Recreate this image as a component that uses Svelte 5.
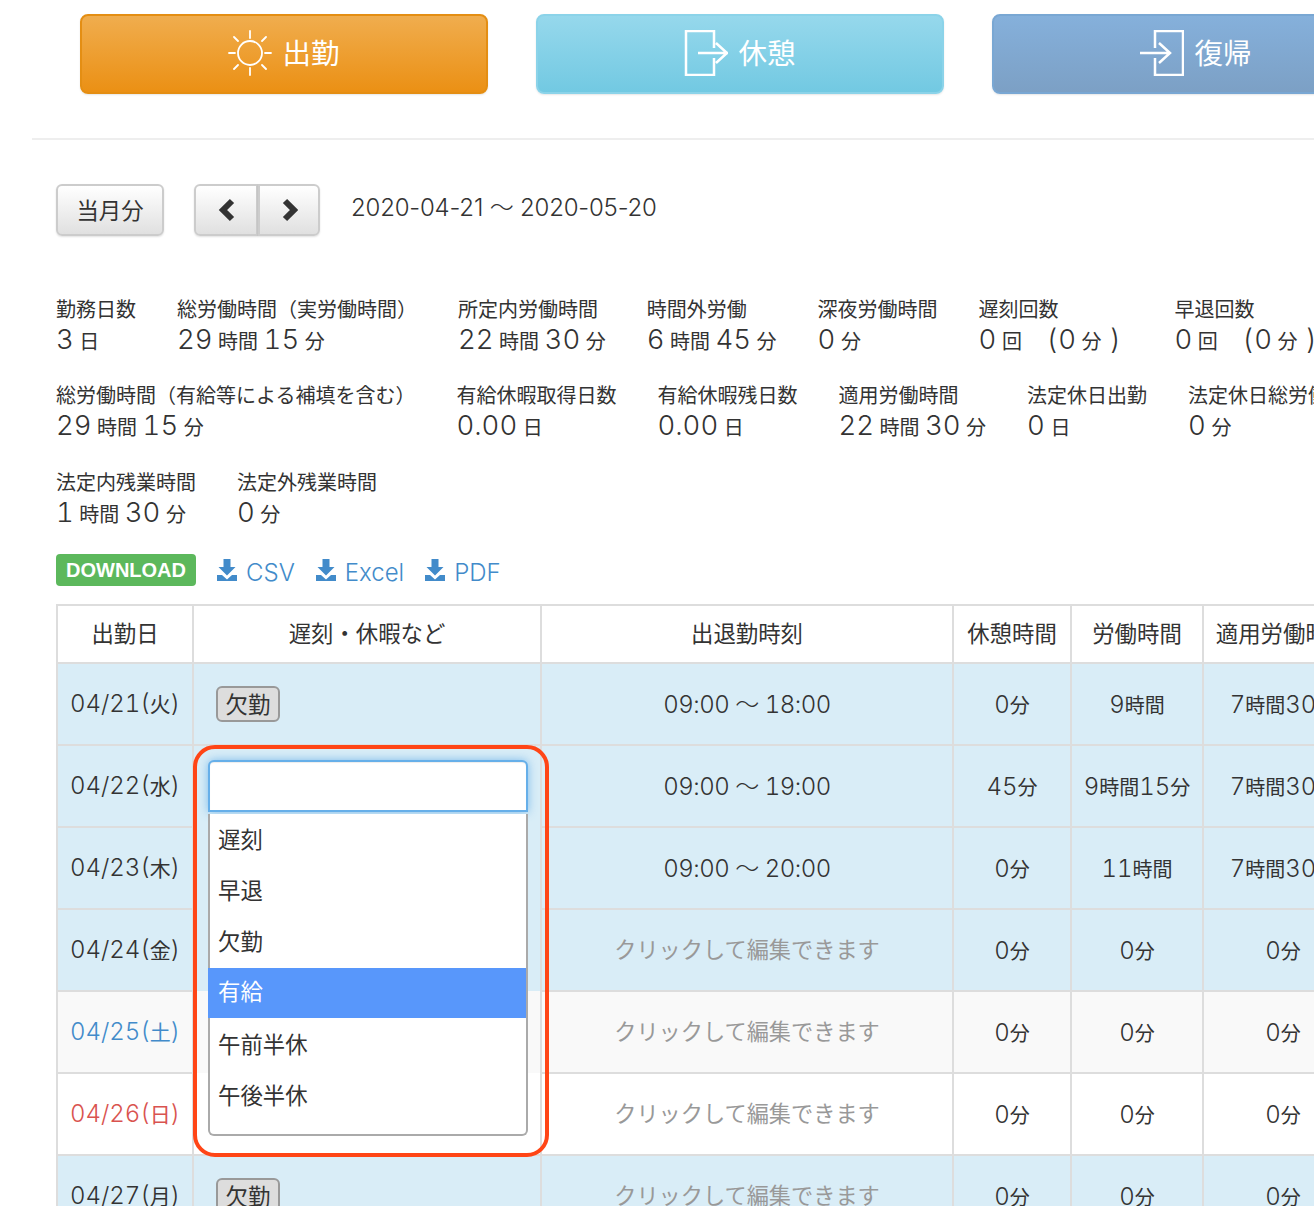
<script>
  const statRows = [
    [
      { label: '勤務日数', value: [['3', '日']] },
      { label: '総労働時間（実労働時間）', value: [['29', '時間'], ['15', '分']] },
      { label: '所定内労働時間', value: [['22', '時間'], ['30', '分']] },
      { label: '時間外労働', value: [['6', '時間'], ['45', '分']] },
      { label: '深夜労働時間', value: [['0', '分']] },
      { label: '遅刻回数', value: [['0', '回']], extra: true },
      { label: '早退回数', value: [['0', '回']], extra: true }
    ],
    [
      { label: '総労働時間（有給等による補填を含む）', value: [['29', '時間'], ['15', '分']] },
      { label: '有給休暇取得日数', value: [['0.00', '日']] },
      { label: '有給休暇残日数', value: [['0.00', '日']] },
      { label: '適用労働時間', value: [['22', '時間'], ['30', '分']] },
      { label: '法定休日出勤', value: [['0', '日']] },
      { label: '法定休日総労働時間', value: [['0', '分']] }
    ],
    [
      { label: '法定内残業時間', value: [['1', '時間'], ['30', '分']] },
      { label: '法定外残業時間', value: [['0', '分']] }
    ]
  ];

  const ph = 'クリックして編集できます';
  const rows = [
    { d: '04/21', w: '火', kind: 'work', badge: true, t: '09:00 ～ 18:00', a: [['0', '分']], b: [['9', '時間']], c: [['7', '時間'], ['30', '分']] },
    { d: '04/22', w: '水', kind: 'work', open: true, t: '09:00 ～ 19:00', a: [['45', '分']], b: [['9', '時間'], ['15', '分']], c: [['7', '時間'], ['30', '分']] },
    { d: '04/23', w: '木', kind: 'work', plain: true, t: '09:00 ～ 20:00', a: [['0', '分']], b: [['11', '時間']], c: [['7', '時間'], ['30', '分']] },
    { d: '04/24', w: '金', kind: 'work', plain: true, a: [['0', '分']], b: [['0', '分']], c: [['0', '分']] },
    { d: '04/25', w: '土', kind: 'sat', plain: true, a: [['0', '分']], b: [['0', '分']], c: [['0', '分']] },
    { d: '04/26', w: '日', kind: 'sun', plain: true, a: [['0', '分']], b: [['0', '分']], c: [['0', '分']] },
    { d: '04/27', w: '月', kind: 'work', badge: true, a: [['0', '分']], b: [['0', '分']], c: [['0', '分']] }
  ];

  const options = ['遅刻', '早退', '欠勤', '有給', '午前半休', '午後半休'];
</script>

{#snippet dur(parts)}
  {#each parts as p}<span class="n">{p[0]}</span><span class="u">{p[1]}</span>{/each}
{/snippet}

{#snippet download()}
  <svg class="dl" width="22" height="24" viewBox="0 0 22 24" aria-hidden="true">
    <path d="M7.500 1h7v8h5L11 17.500 2.500 9h5z" fill="#428bca" />
    <path d="M1 17h5l5 4.500 5-4.500h5v6H1z" fill="#428bca" />
  </svg>
{/snippet}

<div class="page">
  <div class="actions">
    <div class="btn orange">
      <svg width="44" height="46" viewBox="0 0 44 46" aria-hidden="true">
        <g fill="none" stroke="#fff" stroke-width="1.800" stroke-linecap="round">
          <circle cx="22" cy="23" r="12" />
          <path d="M22 1v7M22 38v7M1 23h6M37 23h6M6 7l4 4M38 7l-4 4M6 39l4-4M38 39l-4-4" />
        </g>
      </svg>
      <span>出勤</span>
    </div>
    <div class="btn cyan">
      <svg width="44" height="46" viewBox="0 0 44 46" aria-hidden="true">
        <path d="M30 18V1H2v44h28V28M14 23h30M32 13l11 10-11 10" fill="none" stroke="#fff" stroke-width="2.500" />
      </svg>
      <span>休憩</span>
    </div>
    <div class="btn blue">
      <svg width="44" height="46" viewBox="0 0 44 46" aria-hidden="true">
        <path d="M15 18V1h28v44H15V28M0 23h30M19 13l11 10-11 10" fill="none" stroke="#fff" stroke-width="2.500" />
      </svg>
      <span>復帰</span>
    </div>
  </div>

  <div class="content">
    <div class="toolbar">
      <div class="gbtn month"><span>当月分</span></div>
      <div class="pager">
        <div class="gbtn arrow">
          <svg width="18" height="24" viewBox="0 0 18 24" aria-hidden="true"><path d="M15 3 6 12l9 9" fill="none" stroke="#333" stroke-width="6" /></svg>
        </div>
        <div class="gbtn arrow">
          <svg width="18" height="24" viewBox="0 0 18 24" aria-hidden="true"><path d="M5 3l9 9-9 9" fill="none" stroke="#333" stroke-width="6" /></svg>
        </div>
      </div>
      <div class="range">2020-04-21 ～ 2020-05-20</div>
    </div>

    <div class="stats">
      {#each statRows as row}
        <div class="stat-row">
          {#each row as s}
            <div class="stat">
              <div class="label">{s.label}</div>
              <div class="value">
                {#each s.value as p}<span class="num">{p[0]}</span><span class="unit">{p[1]}</span>{/each}
                {#if s.extra}<span class="paren open">(</span><span class="num">0</span><span class="unit">分</span><span class="paren shut">)</span>{/if}
              </div>
            </div>
          {/each}
        </div>
      {/each}
    </div>

    <div class="downloads">
      <span class="tag">DOWNLOAD</span>
      <span class="link">{@render download()}CSV</span>
      <span class="link">{@render download()}Excel</span>
      <span class="link">{@render download()}PDF</span>
    </div>

    <table>
      <colgroup>
        <col class="c1" /><col class="c2" /><col class="c3" /><col class="c4" /><col class="c5" /><col class="c6" />
      </colgroup>
      <thead>
        <tr>
          <th><span>出勤日</span></th><th><span>遅刻・休暇など</span></th><th><span>出退勤時刻</span></th><th><span>休憩時間</span></th><th><span>労働時間</span></th><th><span>適用労働時間</span></th>
        </tr>
      </thead>
      <tbody>
        {#each rows as r}
          <tr class={r.kind}>
            <td class="date"><span class="day">{r.d}(<span class="wd">{r.w}</span>)</span></td>
            <td class="reason" class:merged-top={r.plain} class:merged-bottom={r.open || (r.plain && r.kind !== 'sun')}>
              {#if r.badge}<span class="badge">欠勤</span>{/if}
              {#if r.open}
                <div class="callout">
                  <div class="search"></div>
                  <ul class="list">
                    {#each options as o}
                      <li class:active={o === '有給'}>{o}</li>
                    {/each}
                  </ul>
                </div>
              {/if}
            </td>
            <td class="time">
              {#if r.t}<span class="clock">{r.t}</span>{:else}<span class="ph">{ph}</span>{/if}
            </td>
            <td class="num-cell">{@render dur(r.a)}</td>
            <td class="num-cell">{@render dur(r.b)}</td>
            <td class="num-cell">{@render dur(r.c)}</td>
          </tr>
        {/each}
      </tbody>
    </table>
  </div>
</div>

<style>
  :global(body) {
    margin: 0;
    overflow: hidden;
    background: #fff;
  }

  .page {
    width: 1314px;
    height: 1206px;
    overflow: hidden;
    box-sizing: border-box;
    padding: 14px 0 0 32px;
    color: #333;
    font-family: Inter, "Noto Sans CJK JP", sans-serif;
    font-weight: 300;
    font-variant-numeric: tabular-nums;
  }

  .actions {
    display: flex;
    gap: 48px;
    padding: 0 0 44px 48px;
    border-bottom: 2px solid #eee;
    width: 1400px;
  }

  .btn {
    flex: 0 0 auto;
    width: 408px;
    height: 80px;
    box-sizing: border-box;
    border-radius: 8px;
    border: 2px solid;
    display: flex;
    align-items: center;
    justify-content: center;
    gap: 10px;
    color: #fff;
    font-size: 28.5px;
    font-family: "Noto Sans CJK JP", sans-serif;
    font-weight: 400;
    box-shadow: 0 1px 2px rgba(0, 0, 0, 0.1);
  }
  .btn svg { flex: none; margin-top: -2px; }
  .btn span { line-height: 1; margin-top: -4px; }

  .orange {
    background: linear-gradient(#f0ad4e, #eb9014);
    border-color: #e48e13;
  }
  .cyan {
    background: linear-gradient(#96d8ec, #72c9e2);
    border-color: #8bd3e9;
  }
  .blue {
    background: linear-gradient(#85b0db, #7ca0c5);
    border-color: #79a7d3;
  }

  .content {
    padding-left: 24px;
  }

  .toolbar {
    display: flex;
    align-items: flex-start;
    margin-top: 44px;
  }

  .gbtn {
    box-sizing: border-box;
    height: 52px;
    background: linear-gradient(#fff, #e0e0e0);
    border: 2px solid #ccc;
    border-radius: 6px;
    display: flex;
    align-items: center;
    justify-content: center;
    box-shadow: 0 1px 2px rgba(0, 0, 0, 0.12);
    font-size: 22.4px;
    font-family: "Noto Sans CJK JP", sans-serif;
    font-weight: 400;
  }
  .month { width: 108px; }
  .month span { margin-top: -2px; }

  .pager {
    display: flex;
    margin-left: 30px;
  }
  .arrow { width: 64px; }
  .arrow:first-child {
    border-radius: 6px 0 0 6px;
    border-right-width: 2px;
  }
  .arrow:last-child {
    width: 62px;
    border-radius: 0 6px 6px 0;
    border-left-width: 2px;
  }

  .range {
    margin-left: 31px;
    font-size: 24px;
    line-height: 48px;
    white-space: nowrap;
    letter-spacing: -0.2px;
    font-variant-numeric: normal;
  }

  .stats {
    margin-top: 58px;
  }
  .stat-row {
    display: flex;
    gap: 41px;
    margin-bottom: 27px;
    white-space: nowrap;
  }
  .stat-row:first-child { margin-bottom: 26px; }
  .label {
    font-size: 20px;
    line-height: 30px;
    font-family: "Noto Sans CJK JP", sans-serif;
    font-weight: 400;
  }
  .value {
    height: 30px;
    line-height: 30px;
    display: flex;
    align-items: baseline;
  }
  .num {
    font-size: 27.5px;
    line-height: 30px;
    position: relative;
    top: -0.5px;
  }
  .unit {
    font-size: 20px;
    line-height: 30px;
    margin: 0 5.5px;
    font-family: "Noto Sans CJK JP", sans-serif;
    font-weight: 400;
  }
  .unit:last-child { margin-right: 0; }
  .paren {
    font-size: 28px;
    line-height: 30px;
  }
  .paren.open { margin: 0 1px 0 19px; }
  .paren.shut { margin: 0 12.5px 0 3px; }

  .downloads {
    display: flex;
    align-items: center;
    height: 32px;
  }
  .tag {
    box-sizing: border-box;
    width: 140px;
    height: 32px;
    background: #5cb85c;
    color: #fff;
    border-radius: 4px;
    font: 700 20px/32px "Liberation Sans", sans-serif;
    text-align: center;
  }
  .link {
    display: inline-flex;
    align-items: center;
    color: #428bca;
    font-size: 24px;
    margin-left: 20px;
    gap: 8px;
    line-height: 36px;
    height: 36px;
    margin-top: 5px;
  }
  .dl { margin-top: -6px; }

  table {
    margin-top: 18px;
    border-collapse: collapse;
    table-layout: fixed;
    width: 1306px;
    font-size: 24px;
  }
  .c1 { width: 136px; }
  .c2 { width: 348px; }
  .c3 { width: 412px; }
  .c4 { width: 118px; }
  .c5 { width: 132px; }
  .c6 { width: 160px; }

  th, td {
    border: 2px solid #ddd;
    padding: 0;
    text-align: center;
    vertical-align: middle;
  }
  th {
    height: 56px;
    font-size: 22.4px;
    font-weight: 400;
    font-family: "Noto Sans CJK JP", sans-serif;
    white-space: nowrap;
  }
  th span { position: relative; top: -2px; }
  td { height: 80px; }

  .work td { background: #d9edf7; }
  .sat td { background: #f9f9f9; }
  .sun td { background: #fff; }

  .date .day {
    white-space: nowrap;
    position: relative;
    top: -1px;
  }
  .wd {
    font-size: 21px;
    font-family: "Noto Sans CJK JP", sans-serif;
    font-weight: 400;
  }
  .sat .date { color: #428bca; }
  .sun .date { color: #d9534f; }

  .reason {
    position: relative;
    text-align: left;
    padding-left: 22px;
  }
  .merged-top { border-top: hidden; }
  .merged-bottom { border-bottom: hidden; }

  .badge {
    display: inline-block;
    box-sizing: border-box;
    width: 64px;
    height: 36px;
    line-height: 30px;
    text-align: center;
    background: #ddd;
    border: 2px solid #999;
    border-radius: 6px;
    font-size: 22.4px;
    font-family: "Noto Sans CJK JP", sans-serif;
    font-weight: 400;
  }

  .callout {
    position: absolute;
    z-index: 2;
    left: -1px;
    top: -1px;
    width: 356px;
    height: 412px;
    box-sizing: border-box;
    border: 4px solid #ff4516;
    border-radius: 22px;
    padding: 11px 17px 0 11px;
  }

  .search {
    height: 52px;
    box-sizing: border-box;
    background: #fff;
    border: 2px solid #66afe9;
    border-radius: 6px 6px 0 0;
    box-shadow: 0 0 10px rgba(102, 175, 233, 0.8), inset 0 1px 1px rgba(0, 0, 0, 0.075);
  }

  .list {
    list-style: none;
    margin: 2px 0 0;
    padding: 1px 0 0;
    box-sizing: border-box;
    height: 322px;
    background: #fff;
    border: 2px solid #aaa;
    border-top: 0;
    border-radius: 0 0 6px 6px;
    font-size: 22.4px;
    font-family: "Noto Sans CJK JP", sans-serif;
    font-weight: 400;
  }
  .list li {
    height: 51.2px;
    line-height: 47px;
    padding-left: 8px;
  }
  .list li.active {
    background: #5897fb;
    color: #fff;
    margin-left: -2px;
    padding-left: 10px;
    height: 50px;
    line-height: 45px;
    margin-top: -1px;
    margin-bottom: 2.2px;
  }

  .time { white-space: nowrap; }
  .clock {
    letter-spacing: -0.5px;
    position: relative;
    top: -1.5px;
  }
  .ph {
    color: #999;
    font-size: 22.2px;
    font-family: "Noto Sans CJK JP", sans-serif;
    font-weight: 400;
    position: relative;
    top: -2px;
  }

  .num-cell { white-space: nowrap; }
  .u {
    font-size: 20px;
    font-family: "Noto Sans CJK JP", sans-serif;
    font-weight: 400;
  }
</style>
